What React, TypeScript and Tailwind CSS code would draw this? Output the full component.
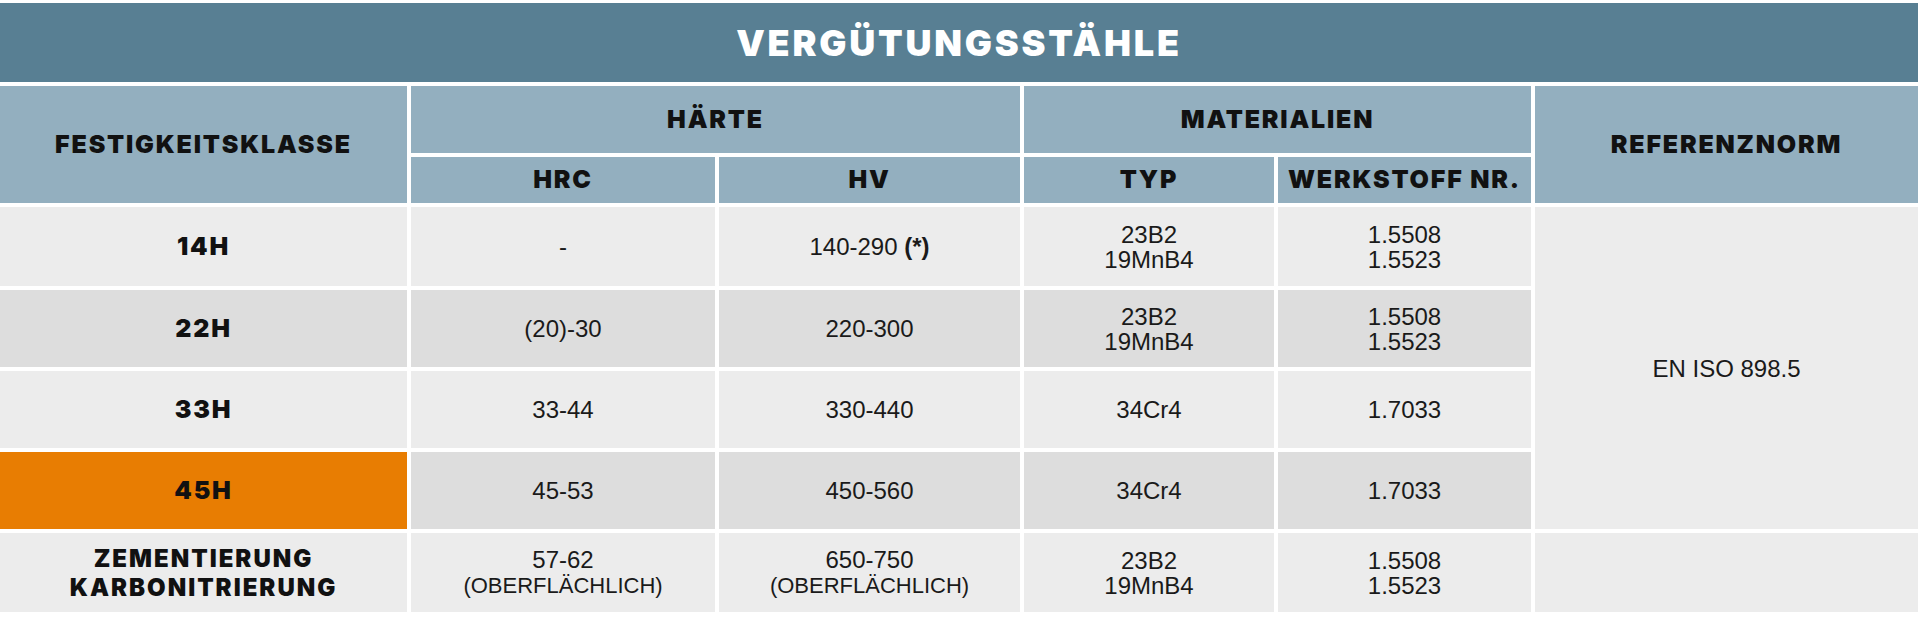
import React from 'react';

const heavy = "font-['Inter','Roboto','Liberation_Sans',sans-serif] font-black";
const body = "font-['Liberation_Sans','Arial',sans-serif]";

const head = `${heavy} bg-[#93afbf] text-[#111] text-[25px] tracking-[1.8px] flex items-center justify-center`;
const cell = `${body} text-[#1a1a1a] text-[24px] leading-[25px] flex flex-col items-center justify-center text-center`;

type Row = {
  klasse: string[];
  hrc: React.ReactNode[];
  hv: React.ReactNode[];
  typ: string[];
  nr: string[];
  dark?: boolean;
  orange?: boolean;
};

const ober = <span className="text-[22px]">(OBERFLÄCHLICH)</span>;

const rows: Row[] = [
  { klasse: ['14H'], hrc: ['-'], hv: [<>140-290 <b className="font-bold">(*)</b></>], typ: ['23B2', '19MnB4'], nr: ['1.5508', '1.5523'] },
  { klasse: ['22H'], hrc: ['(20)-30'], hv: ['220-300'], typ: ['23B2', '19MnB4'], nr: ['1.5508', '1.5523'], dark: true },
  { klasse: ['33H'], hrc: ['33-44'], hv: ['330-440'], typ: ['34Cr4'], nr: ['1.7033'] },
  { klasse: ['45H'], hrc: ['45-53'], hv: ['450-560'], typ: ['34Cr4'], nr: ['1.7033'], dark: true, orange: true },
  {
    klasse: ['ZEMENTIERUNG', 'KARBONITRIERUNG'],
    hrc: ['57-62', ober],
    hv: ['650-750', ober],
    typ: ['23B2', '19MnB4'],
    nr: ['1.5508', '1.5523'],
  },
];

function Lines({ items }: { items: React.ReactNode[] }) {
  return (
    <>
      {items.map((t, i) => (
        <div key={i}>{t}</div>
      ))}
    </>
  );
}

export default function App() {
  return (
    <div className="w-[1920px] h-[617px] bg-white pt-[3px] pr-[2px]">
      <div className="grid grid-cols-[407px_304px_301px_250px_253px_1fr] grid-rows-[79px_67px_46px_79px_77px_77px_77px_79px] gap-[4px]">
        {/* title */}
        <div className={`${heavy} col-span-6 bg-[#587f93] text-white text-[36px] tracking-[2.8px] flex items-center justify-center`}>
          VERGÜTUNGSSTÄHLE
        </div>

        {/* header */}
        <div className={`${head} row-span-2`}>FESTIGKEITSKLASSE</div>
        <div className={`${head} col-span-2`}>HÄRTE</div>
        <div className={`${head} col-span-2`}>MATERIALIEN</div>
        <div className={`${head} row-span-2`}>REFERENZNORM</div>
        <div className={head}>HRC</div>
        <div className={head}>HV</div>
        <div className={head}>TYP</div>
        <div className={head}>WERKSTOFF NR.</div>

        {/* body */}
        {rows.map((r, i) => {
          const bg = r.dark ? 'bg-[#dddddd]' : 'bg-[#ececec]';
          const two = r.klasse.length > 1;
          return (
            <React.Fragment key={i}>
              <div
                className={`${heavy} ${r.orange ? 'bg-[#e87d02]' : bg} text-[#111] ${two ? 'text-[24px] leading-[29px] tracking-[2px]' : 'text-[25px] tracking-[1.8px]'} flex flex-col items-center justify-center`}
                style={{ gridRow: i + 4, gridColumn: 1 }}
              >
                <Lines items={r.klasse} />
              </div>
              <div className={`${cell} ${bg}`} style={{ gridRow: i + 4, gridColumn: 2 }}>
                <Lines items={r.hrc} />
              </div>
              <div className={`${cell} ${bg}`} style={{ gridRow: i + 4, gridColumn: 3 }}>
                <Lines items={r.hv} />
              </div>
              <div className={`${cell} ${bg}`} style={{ gridRow: i + 4, gridColumn: 4 }}>
                <Lines items={r.typ} />
              </div>
              <div className={`${cell} ${bg}`} style={{ gridRow: i + 4, gridColumn: 5 }}>
                <Lines items={r.nr} />
              </div>
            </React.Fragment>
          );
        })}
        <div className={`${cell} bg-[#ececec]`} style={{ gridRow: '4 / span 4', gridColumn: 6 }}>
          EN ISO 898.5
        </div>
        <div className="bg-[#ececec]" style={{ gridRow: 8, gridColumn: 6 }} />
      </div>
    </div>
  );
}
